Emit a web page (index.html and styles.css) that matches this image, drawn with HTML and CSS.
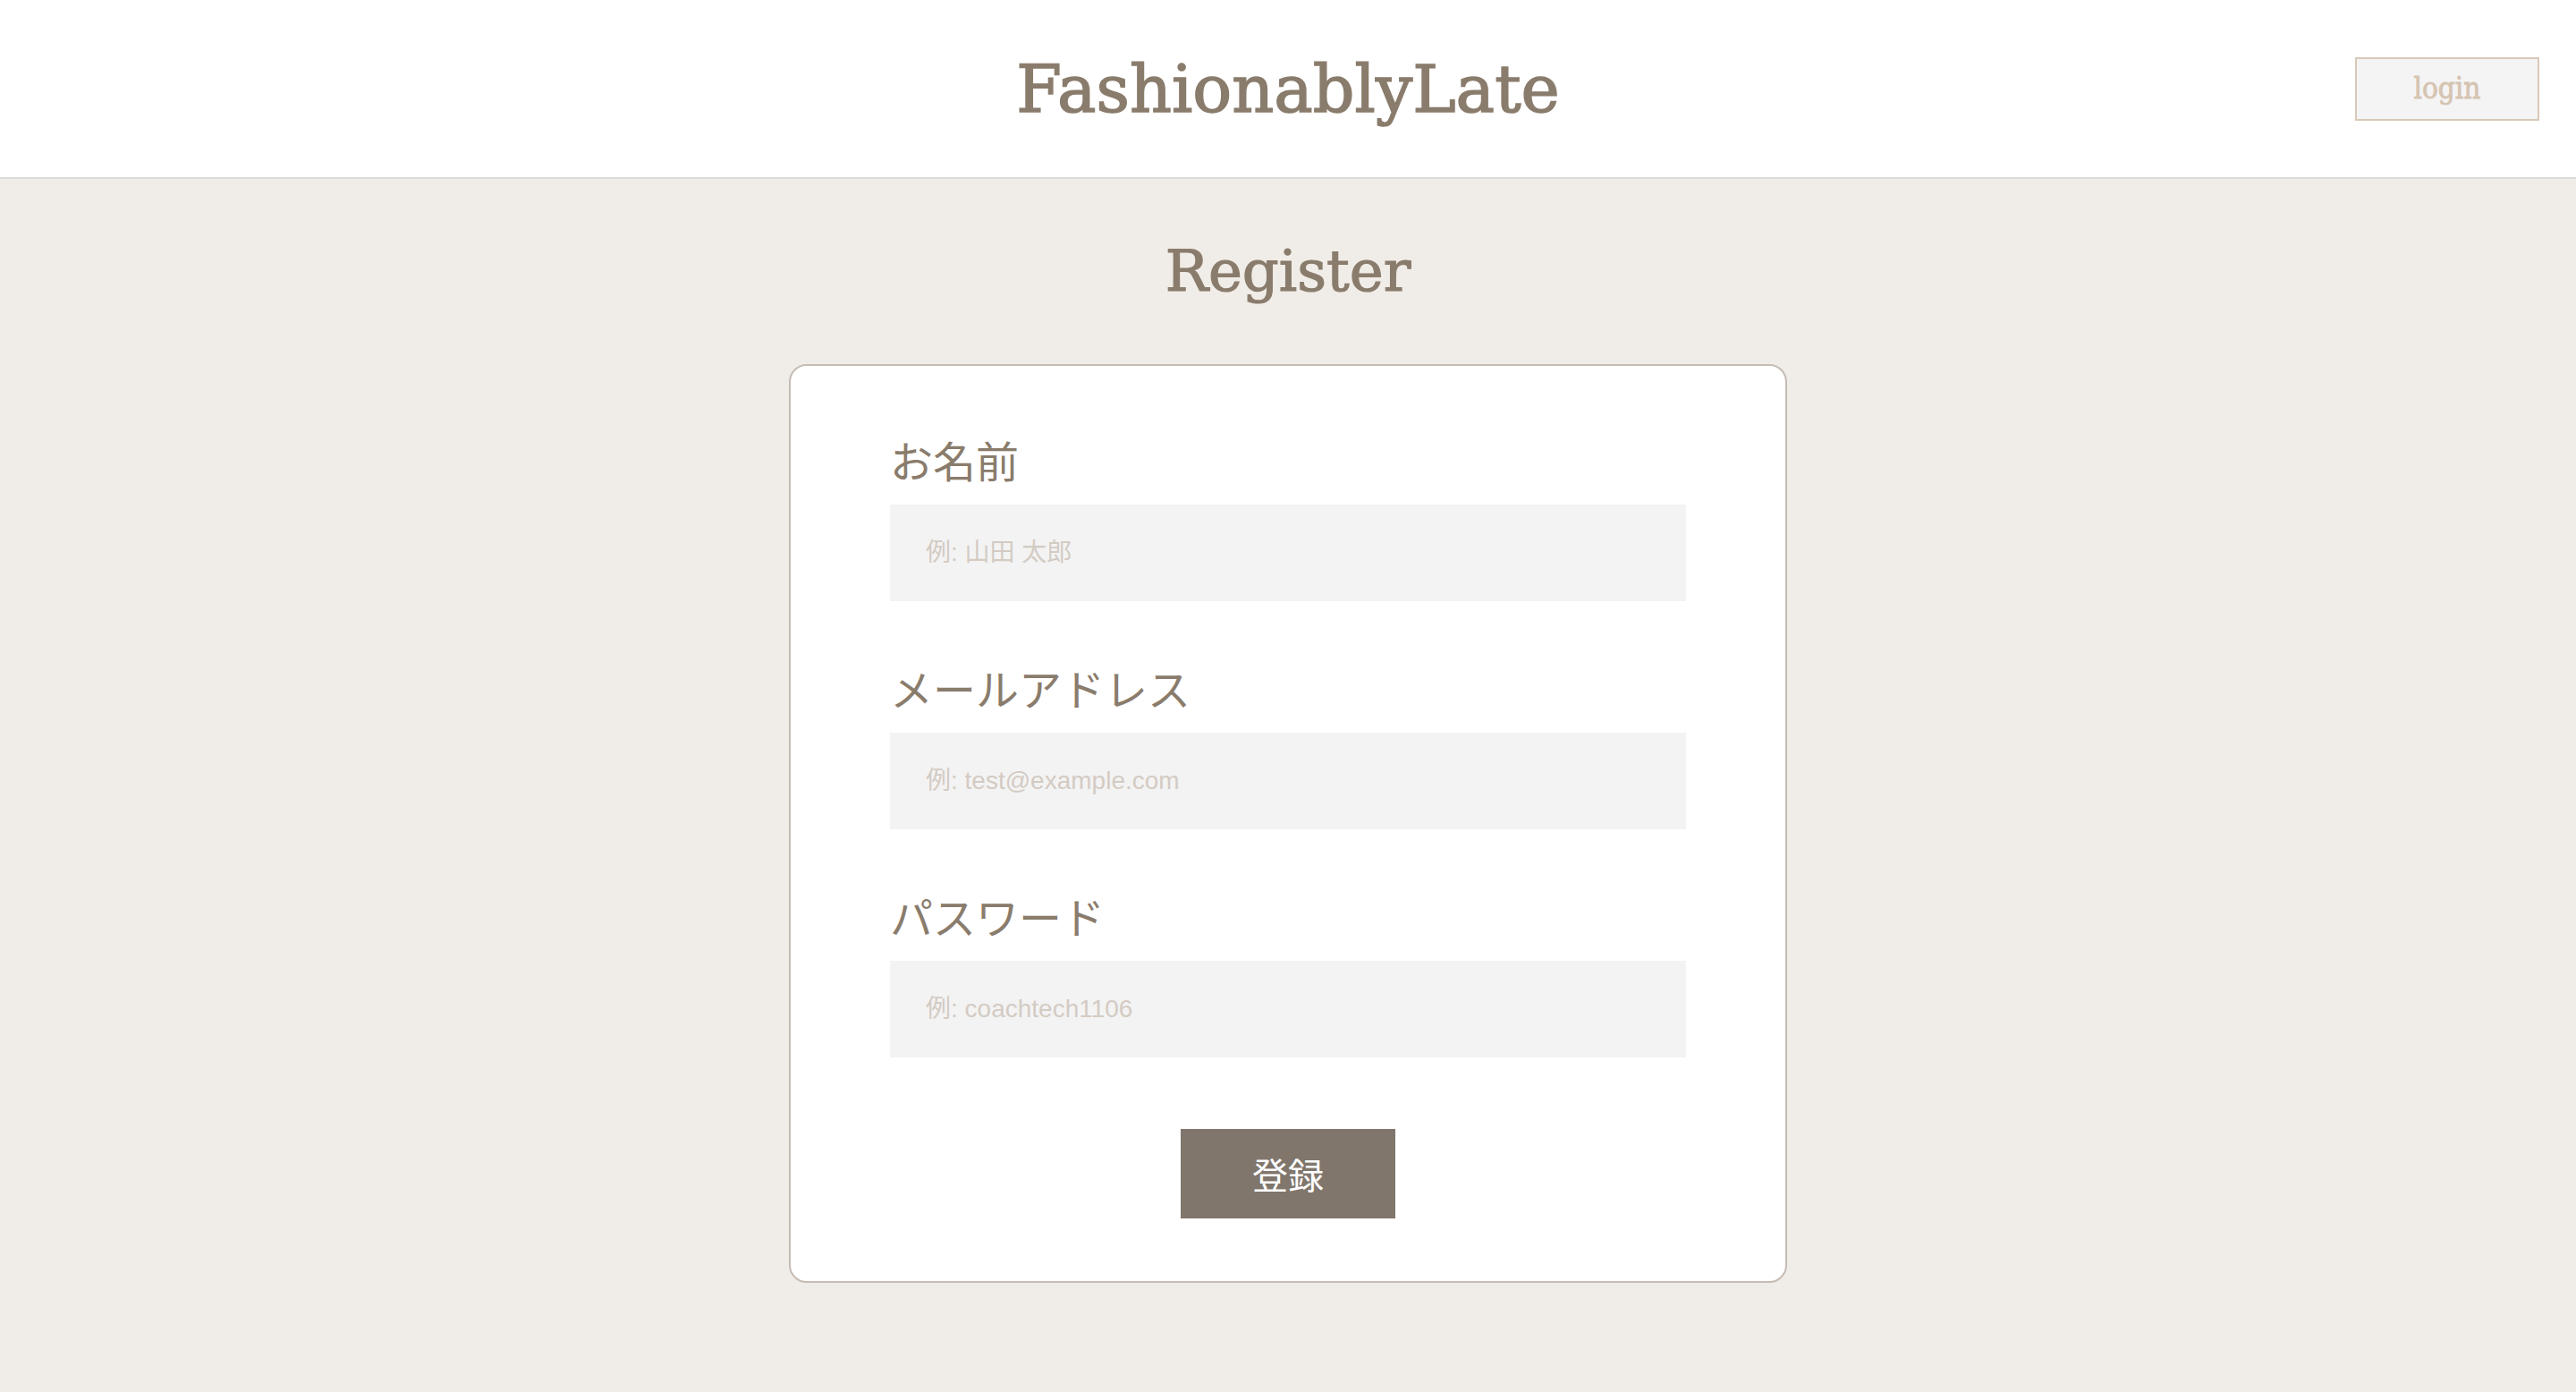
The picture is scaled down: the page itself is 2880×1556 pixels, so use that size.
FILE: index.html
```html
<!DOCTYPE html>
<html lang="ja">
<head>
<meta charset="utf-8">
<title>FashionablyLate</title>
<link rel="stylesheet" href="styles.css">
</head>
<body>
<header class="header">
  <div class="header__spacer"></div>
  <h1 class="header__logo">FashionablyLate</h1>
  <div class="header__nav">
    <a class="header__login" href="#">login</a>
  </div>
</header>
<main class="main">
  <h2 class="page-title">Register</h2>
  <form class="card">
    <div class="field">
      <label class="field__label">お名前</label>
      <input class="field__input" type="text" placeholder="例: 山田 太郎">
    </div>
    <div class="field">
      <label class="field__label">メールアドレス</label>
      <input class="field__input" type="email" placeholder="例: test@example.com">
    </div>
    <div class="field">
      <label class="field__label">パスワード</label>
      <input class="field__input" type="password" placeholder="例: coachtech1106">
    </div>
    <div class="actions">
      <button class="submit" type="button">登録</button>
    </div>
  </form>
</main>
</body>
</html>
```
FILE: styles.css
```css
html {
  background: #f0ece7;
}
body {
  margin: 0;
  min-height: 1556px;
  background: #f0ece7;
  font-family: "Noto Sans CJK JP", "Noto Sans", sans-serif;
}
.header {
  display: grid;
  grid-template-columns: 1fr auto 1fr;
  align-items: center;
  height: 198px;
  background: #ffffff;
  border-bottom: 2px solid #dcdcdc;
}
.header__logo {
  margin: 0;
  font-family: "DejaVu Serif", serif;
  font-weight: normal;
  font-size: 73px;
  line-height: 1;
  color: #8a7c6c;
  -webkit-text-stroke: 1.5px #8a7c6c;
}
.header__nav {
  display: flex;
  justify-content: flex-end;
  padding-right: 41px;
}
.header__login {
  display: flex;
  align-items: center;
  justify-content: center;
  box-sizing: border-box;
  width: 206px;
  height: 71px;
  background: #f4f4f4;
  border: 2px solid #d9c8b7;
  color: #d6c4b2;
  font-family: "DejaVu Serif Condensed", "DejaVu Serif", serif;
  font-size: 33px;
  text-decoration: none;
  padding-bottom: 1px;
  -webkit-text-stroke: 0.8px #d6c4b2;
}
.main {
  display: flex;
  flex-direction: column;
  align-items: center;
  padding-bottom: 120px;
}
.page-title {
  margin: 71px 0 72px;
  font-family: "DejaVu Serif", serif;
  font-weight: normal;
  font-size: 64px;
  line-height: 1;
  color: #8a7c6c;
  -webkit-text-stroke: 1.2px #8a7c6c;
}
.card {
  box-sizing: border-box;
  width: 1116px;
  padding: 68px 111px 70px;
  background: #ffffff;
  border: 2px solid #c6bcb2;
  border-radius: 20px;
  display: flex;
  flex-direction: column;
  gap: 60px;
}
.field {
  display: flex;
  flex-direction: column;
  gap: 15px;
}
.field__label {
  font-size: 48px;
  line-height: 72px;
  color: #8a7c6c;
}
.field__input {
  box-sizing: border-box;
  width: 100%;
  height: 108px;
  margin: 0;
  padding: 0 40px;
  border: none;
  outline: none;
  background: #f3f3f3;
  font-family: "Liberation Sans", "Noto Sans CJK JP", sans-serif;
  font-size: 28px;
  color: #8a7c6c;
}
.field__input::placeholder {
  color: #d3cbc3;
}
.actions {
  display: flex;
  justify-content: center;
  margin-top: 20px;
}
.submit {
  width: 240px;
  height: 100px;
  border: none;
  background: #80766c;
  color: #ffffff;
  font-family: "Noto Sans CJK JP", sans-serif;
  font-size: 40px;
  padding: 0;
}
```
